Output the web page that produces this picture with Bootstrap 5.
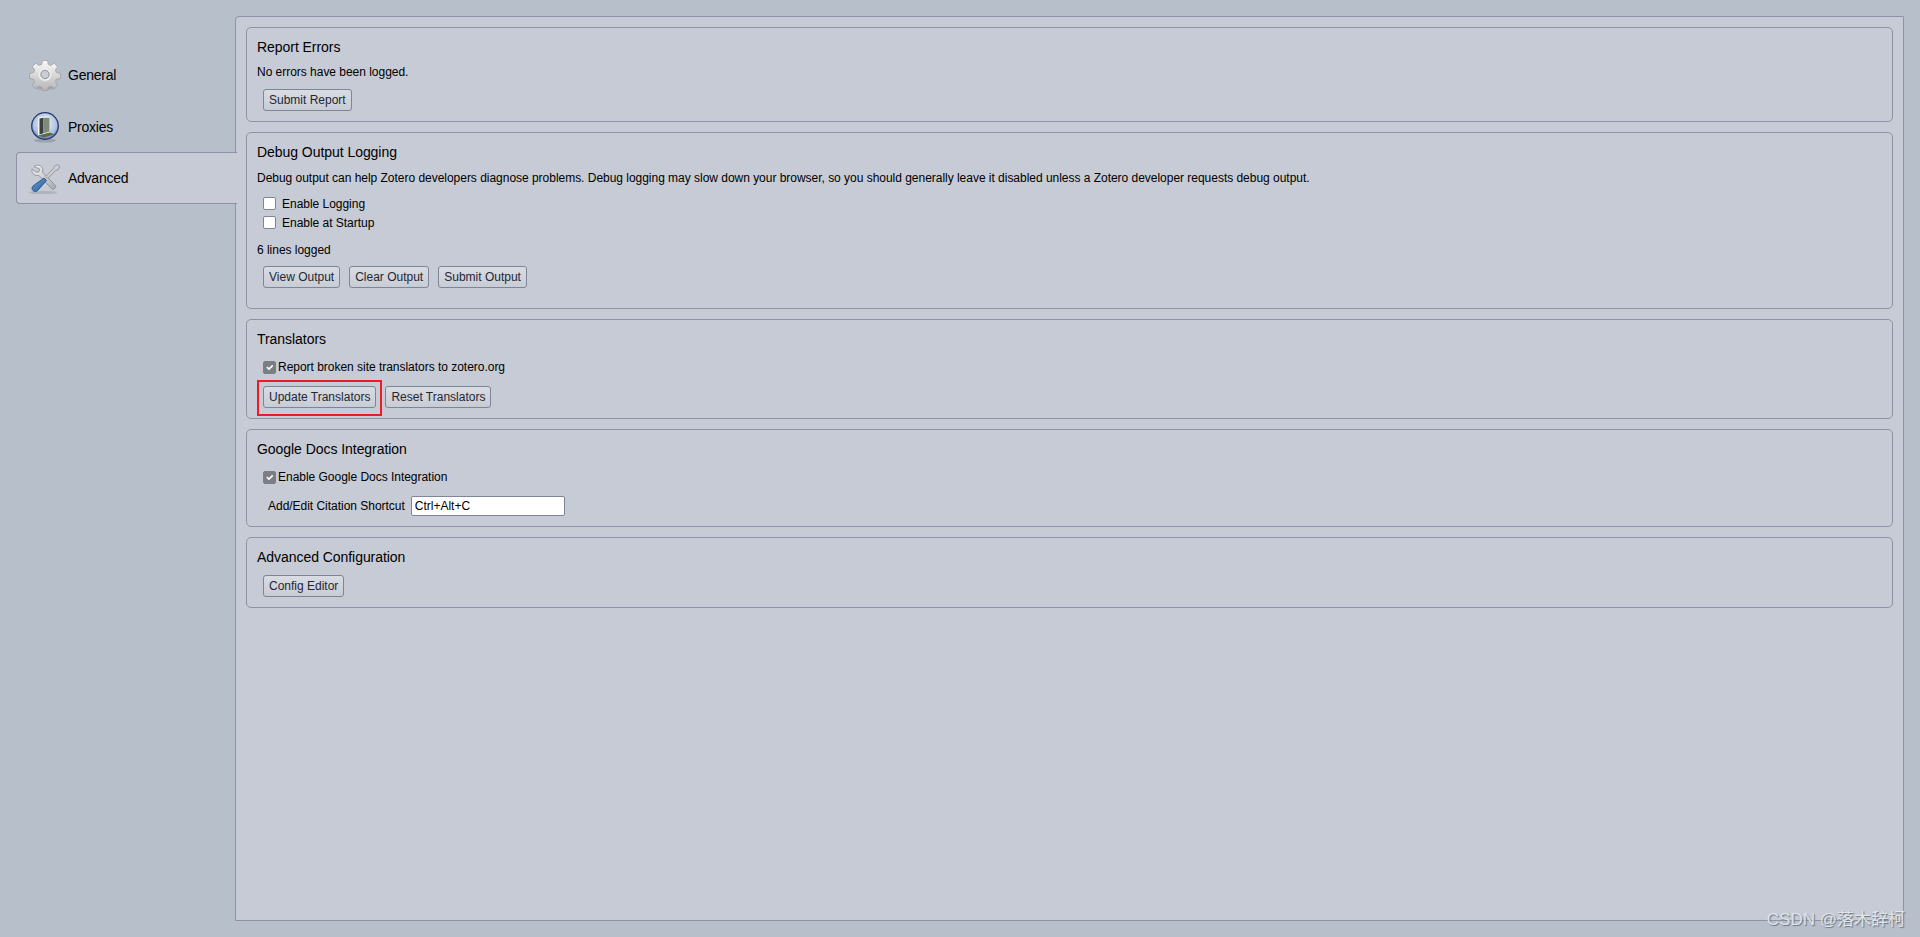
<!DOCTYPE html>
<html lang="en">
<head>
    <meta charset="UTF-8">
    <title>Zotero Preferences - Advanced</title>
    <link href="https://cdn.jsdelivr.net/npm/bootstrap@5.3.0/dist/css/bootstrap.min.css" rel="stylesheet">
    <style>
        html, body { height: 100%; }
        body {
            background: #b7bfcb;
            color: #000;
            font-family: "Liberation Sans", Arial, sans-serif;
            font-size: 12px;
            line-height: 15px;
            letter-spacing: -0.025px;
            overflow: hidden;
        }
        .side-col { width: 235px; padding: 49px 0 0 16px; flex: none; }
        .side-tab {
            display: flex;
            align-items: center;
            gap: 7px;
            height: 52px;
            padding-left: 12px;
            font-size: 14px;
            letter-spacing: -0.25px;
            color: #000;
            text-decoration: none;
            border: 1px solid transparent;
            border-right: 0;
        }
        .side-tab.on {
            width: 221px;
            margin-top: -1px;
            padding-top: 1px;
            position: relative;
            z-index: 2;
            background: #c6cbd5;
            border-color: #8c93a4;
            border-radius: 4px 0 0 4px;
        }
        .side-tab svg { width: 32px; height: 32px; flex: none; }
        .main-panel {
            flex: 1;
            margin: 16px 16px 16px 0;
            padding: 10px;
            background: #c6cbd5;
            border: 1px solid #8c93a4;
            border-radius: 4px 0 0 0;
        }
        .pref-card {
            --bs-card-bg: transparent;
            --bs-card-border-color: #8c93a4;
            --bs-card-border-radius: 5px;
            margin-bottom: 10px;
            padding: 10px 10px 10px;
        }
        .pref-card.wide-foot { padding-bottom: 20px; }
        .pref-title { font-size: 14px; line-height: 18px; margin: 0 0 9px; font-weight: 400; letter-spacing: -0.05px; }
        .pref-title.loose { margin-bottom: 10px; }
        .pref-text { margin: 0 0 9px; line-height: 15px; }
        .pref-text.nudge { padding-top: 1px; margin-bottom: 8px; }
        .zbtn {
            height: 22px;
            padding: 0 5px;
            font-size: 12px;
            line-height: 20px;
            color: #1f2733;
            background: linear-gradient(#d9dce3, #c8ccd5);
            border: 1px solid #7d8596;
            border-radius: 3px;
            white-space: nowrap;
        }
        .zbtn:hover { color: #1f2733; background: #d9dce3; border-color: #7d8596; }
        .btn-row { display: flex; gap: 9px; padding-left: 6px; }
        .chk-row { display: flex; align-items: center; gap: 6px; padding-left: 6px; height: 19px; }
        .chk-row:not(.tight) span { padding-top: 2px; }
        .chk-row.tight { gap: 2px; }
        .chk-row.last { margin-bottom: 9px; }
        .chk-row.last.wide { margin-bottom: 11px; }
        .form-check-input.zchk {
            width: 13px;
            height: 13px;
            margin: 0;
            flex: none;
            border-color: #7d8596;
            border-radius: 2px;
        }
        .form-check-input.zchk:checked { background-color: #7b7e85; border-color: #7b7e85; }
        /* красная рамка поверх кнопки */
        .update-box { position: relative; }
        .update-box::after {
            content: "";
            position: absolute;
            inset: -7px -7px -9px -7px;
            border: 2px solid #ed1c24;
            pointer-events: none;
        }
        .short-row { display: flex; align-items: center; gap: 6px; padding-left: 11px; }
        .short-input {
            width: 154px;
            height: 20px;
            padding: 0 3px;
            font-size: 12px;
            color: #000;
            background: #fff;
            border: 1px solid #7d8596;
            border-radius: 2px;
        }
        .wmark {
            position: absolute;
            right: 15px;
            bottom: 7px;
            font-family: "Liberation Sans", "Noto Sans CJK SC", sans-serif;
            font-size: 17px;
            line-height: 20px;
            letter-spacing: 0;
            color: #e0e3e8;
            text-shadow: 1px 1px 1px #6d7280;
        }
    </style>
</head>
<body class="d-flex position-relative">
    <!-- Левая колонка -->
    <nav class="side-col">
        <a class="side-tab" href="#">
            <svg viewBox="0 0 32 32">
                <defs>
                    <linearGradient id="gearFill" x1="0" y1="0" x2="0" y2="1">
                        <stop offset="0" stop-color="#fafafa"/>
                        <stop offset="1" stop-color="#b5b5b5"/>
                    </linearGradient>
                </defs>
                <ellipse cx="16" cy="29" rx="10" ry="2" fill="#8f96a3" opacity=".5"/>
                <path d="M13.5 1.5h5l.8 4 2.6 1 3.3-2.3 3.5 3.5-2.3 3.3 1 2.6 4 .8v5l-4 .8-1 2.6 2.3 3.3-3.5 3.500-3.300-2.300-2.600 1-.8 3.200h-5l-.8-3.200-2.600-1-3.300 2.300-3.500-3.500 2.300-3.300-1-2.600-4-.8v-5l4-.8 1-2.600-2.300-3.300 3.500-3.500 3.300 2.300 2.600-1z" fill="url(#gearFill)" stroke="#9a9a9a" stroke-width=".7"/>
                <circle cx="16" cy="15.500" r="6.500" fill="#efefef"/>
                <circle cx="16" cy="15.500" r="4.200" fill="#c9cdd5" stroke="#8d8d8d"/>
            </svg>
            General
        </a>
        <a class="side-tab" href="#">
            <svg viewBox="0 0 32 32">
                <defs>
                    <radialGradient id="globeFill" cx=".5" cy=".4" r=".65">
                        <stop offset="0" stop-color="#f4f7fb"/>
                        <stop offset=".7" stop-color="#a9c0de"/>
                        <stop offset="1" stop-color="#2c4f96"/>
                    </radialGradient>
                </defs>
                <ellipse cx="16" cy="29.500" rx="11" ry="2" fill="#7f8794" opacity=".5"/>
                <circle cx="16" cy="15" r="13.300" fill="url(#globeFill)" stroke="#24376e" stroke-width="1.300"/>
                <path d="M9 6.500l5-1 7 0v16l-12 3z" fill="#f2f2ee"/>
                <path d="M10.500 7.500l4-.8 0 15.500-4 1.300z" fill="#3b3f46"/>
                <path d="M14.500 6.700h6v14l-6 1.500z" fill="#7f8a78"/>
                <path d="M9 24.500l12-3 4 2-10 3z" fill="#5d6b3e"/>
            </svg>
            Proxies
        </a>
        <a class="side-tab on" href="#">
            <svg viewBox="0 0 32 32">
                <defs>
                    <linearGradient id="steelFill" x1="0" y1="0" x2="1" y2="1">
                        <stop offset="0" stop-color="#f5f5f5"/>
                        <stop offset="1" stop-color="#a6a8ab"/>
                    </linearGradient>
                    <linearGradient id="handleFill" x1="0" y1="0" x2="1" y2="1">
                        <stop offset="0" stop-color="#6fa0d6"/>
                        <stop offset="1" stop-color="#1f5a9c"/>
                    </linearGradient>
                </defs>
                <ellipse cx="14" cy="29.500" rx="14" ry="1.600" fill="#8f96a3" opacity=".45"/>
                <path d="M5 3.500c3-2 6.500-1.500 8 .8 1 1.500 1 3.500.4 4.700l13 13.500c1.500 1.600-1.800 5-3.500 3.400L9.800 12.300c-2 .6-4.300 0-5.700-1.700C3 9.200 2.700 7.600 3 6l4 3.300 3-.6.500-2.800z" fill="url(#steelFill)" stroke="#85888e" stroke-width=".8"/>
                <path d="M29 1.500l1.800 1.800-2 3.700-2 .4-8 8-2-2 8-8 .4-2z" fill="url(#steelFill)" stroke="#85888e" stroke-width=".8"/>
                <path d="M15 15l2.500 2.500-8.500 9.700c-1.500 1.600-3.500 1.800-5 .4s-1.300-3.500.4-5z" fill="url(#handleFill)" stroke="#1b4a82" stroke-width=".8"/>
            </svg>
            Advanced
        </a>
    </nav>

    <!-- Основная панель -->
    <main class="main-panel">
        <section class="card pref-card">
            <h2 class="pref-title">Report Errors</h2>
            <p class="pref-text">No errors have been logged.</p>
            <div class="btn-row"><button class="btn zbtn">Submit Report</button></div>
        </section>

        <section class="card pref-card wide-foot">
            <h2 class="pref-title">Debug Output Logging</h2>
            <p class="pref-text nudge">Debug output can help Zotero developers diagnose problems. Debug logging may slow down your browser, so you should generally leave it disabled unless a Zotero developer requests debug output.</p>
            <div class="chk-row"><input class="form-check-input zchk" type="checkbox"><span>Enable Logging</span></div>
            <div class="chk-row last wide"><input class="form-check-input zchk" type="checkbox"><span>Enable at Startup</span></div>
            <p class="pref-text mb-0 pb-2">6 lines logged</p>
            <div class="btn-row">
                <button class="btn zbtn">View Output</button>
                <button class="btn zbtn">Clear Output</button>
                <button class="btn zbtn">Submit Output</button>
            </div>
        </section>

        <section class="card pref-card">
            <h2 class="pref-title loose">Translators</h2>
            <div class="chk-row tight last"><input class="form-check-input zchk" type="checkbox" checked><span>Report broken site translators to zotero.org</span></div>
            <div class="btn-row">
                <button class="btn zbtn update-box">Update Translators</button>
                <button class="btn zbtn">Reset Translators</button>
            </div>
        </section>

        <section class="card pref-card">
            <h2 class="pref-title loose">Google Docs Integration</h2>
            <div class="chk-row tight last"><input class="form-check-input zchk" type="checkbox" checked><span>Enable Google Docs Integration</span></div>
            <div class="short-row">
                <label>Add/Edit Citation Shortcut</label>
                <input class="short-input" type="text" value="Ctrl+Alt+C">
            </div>
        </section>

        <section class="card pref-card">
            <h2 class="pref-title">Advanced Configuration</h2>
            <div class="btn-row"><button class="btn zbtn">Config Editor</button></div>
        </section>
    </main>

    <div class="wmark">CSDN @落木辞柯</div>
</body>
</html>
